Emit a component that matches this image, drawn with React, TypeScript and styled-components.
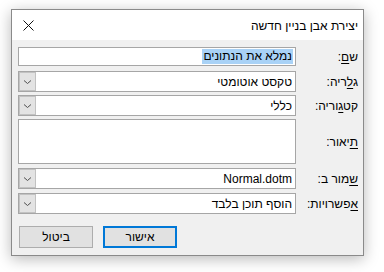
import React from "react";
import styled, { createGlobalStyle } from "styled-components";

const GlobalStyle = createGlobalStyle`
  html, body {
    margin: 0;
    padding: 0;
    background: #ffffff;
  }
  body {
    font-family: "Liberation Sans", "DejaVu Sans", Arial, sans-serif;
    font-size: 12px;
    color: #000;
  }
`;

const SPage = styled.div`
  width: 384px;
  height: 272px;
  padding: 9px 0 0 11px;
  box-sizing: border-box;
`;

const SDialog = styled.div`
  direction: rtl;
  width: 353px;
  height: 247px;
  box-sizing: border-box;
  border: 1px solid #8a8a8a;
  background: #f0f0f0;
  box-shadow: 0 3px 14px rgba(0, 0, 0, 0.28);
  display: flex;
  flex-direction: column;
`;

const STitleBar = styled.div`
  height: 30px;
  background: #ffffff;
  display: flex;
  align-items: center;
  justify-content: space-between;
  padding: 0 5px 0 10px;
`;

const STitle = styled.div`
  font-size: 12px;
  line-height: 16px;
  padding-top: 1px;
`;

const SClose = styled.div`
  width: 12px;
  height: 12px;
  display: grid;
  place-items: center;
`;

const SBody = styled.div`
  flex: 1;
  display: flex;
  flex-direction: column;
  padding: 7px 5px 7px 6px;
`;

const SRow = styled.div<{ $h: number; $mt: number }>`
  display: grid;
  grid-template-columns: 62px 1fr;
  align-items: center;
  height: ${({ $h }) => $h}px;
  margin-top: ${({ $mt }) => $mt}px;
`;

const SLabel = styled.div`
  font-size: 12px;
  white-space: nowrap;

  u {
    text-underline-offset: 2px;
  }
`;

const SField = styled.div`
  height: 100%;
  box-sizing: border-box;
  border: 1px solid #a6a6a6;
  background: #ffffff;
  display: flex;
  align-items: center;
  padding: 0 2px;
`;

const SSelected = styled.span`
  background: #a9d2f6;
  line-height: 15px;
  padding: 0 1px;
`;

const SCombo = styled.div`
  height: 100%;
  box-sizing: border-box;
  border: 1px solid #a6a6a6;
  background: #ffffff;
  display: flex;
  align-items: center;
`;

const SComboText = styled.div`
  flex: 1;
  padding: 0 3px;
`;

const SDropButton = styled.div`
  width: 17px;
  height: 100%;
  box-sizing: border-box;
  background: #e3e3e3;
  border: 1px solid #c2c2c2;
  display: grid;
  place-items: center;
`;

const STextArea = styled.div`
  height: 100%;
  box-sizing: border-box;
  border: 1px solid #a6a6a6;
  background: #ffffff;
`;

const SButtons = styled.div`
  display: flex;
  gap: 10px;
  justify-content: flex-end;
  margin-top: 12px;
  padding-left: 1px;
`;

const SButton = styled.div<{ $primary?: boolean }>`
  width: 74px;
  height: 22px;
  box-sizing: border-box;
  background: #e1e1e1;
  border: ${({ $primary }) =>
    $primary ? "2px solid #0078d7" : "1px solid #adadad"};
  display: grid;
  place-items: center;
  font-size: 12px;
`;

const Chevron: React.FC = () => (
  <svg width="9" height="6" viewBox="0 0 9 6">
    <path d="M1 1.5 L4.5 4.5 L8 1.5" fill="none" stroke="#505050" strokeWidth="1" />
  </svg>
);

const Combo: React.FC<{ value?: string }> = ({ value }) => (
  <SCombo>
    <SComboText>{value}</SComboText>
    <SDropButton>
      <Chevron />
    </SDropButton>
  </SCombo>
);

const App: React.FC = () => {
  return (
    <SPage>
      <GlobalStyle />
      <SDialog>
        <STitleBar>
          <STitle>יצירת אבן בניין חדשה</STitle>
          <SClose>
            <svg width="11" height="11" viewBox="0 0 11 11">
              <path d="M0.5 0.5 L10.5 10.5 M10.5 0.5 L0.5 10.5" stroke="#111" strokeWidth="1" />
            </svg>
          </SClose>
        </STitleBar>
        <SBody>
          <SRow $h={19} $mt={0}>
            <SLabel>
              ש<u>ם</u>:
            </SLabel>
            <SField>
              <SSelected>נמלא את הנתונים</SSelected>
            </SField>
          </SRow>
          <SRow $h={21} $mt={5}>
            <SLabel>
              ג<u>ל</u>ריה:
            </SLabel>
            <Combo value="טקסט אוטומטי" />
          </SRow>
          <SRow $h={21} $mt={3}>
            <SLabel>
              קט<u>ג</u>וריה:
            </SLabel>
            <Combo value="כללי" />
          </SRow>
          <SRow $h={45} $mt={3}>
            <SLabel>
              <u>ת</u>יאור:
            </SLabel>
            <STextArea />
          </SRow>
          <SRow $h={21} $mt={4}>
            <SLabel>
              <u>ש</u>מור ב:
            </SLabel>
            <Combo value="Normal.dotm" />
          </SRow>
          <SRow $h={21} $mt={4}>
            <SLabel>
              <u>א</u>פשרויות:
            </SLabel>
            <Combo value="הוסף תוכן בלבד" />
          </SRow>
          <SButtons>
            <SButton $primary>אישור</SButton>
            <SButton>ביטול</SButton>
          </SButtons>
        </SBody>
      </SDialog>
    </SPage>
  );
};

export default App;
